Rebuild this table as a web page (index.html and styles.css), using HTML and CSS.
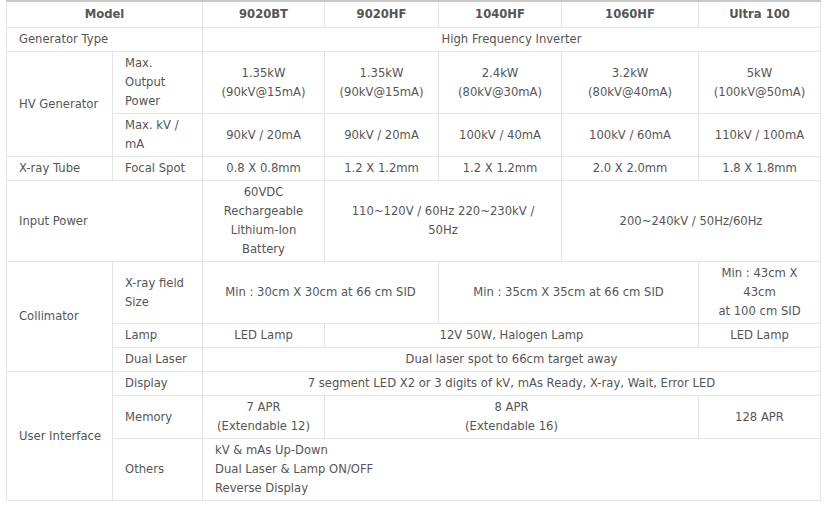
FILE: index.html
```html
<!DOCTYPE html>
<html lang="en">
<head>
<meta charset="utf-8">
<title>Spec table</title>
<link rel="stylesheet" href="styles.css">
</head>
<body>
<table class="spec">
  <colgroup>
    <col class="c-cat">
    <col class="c-sub">
    <col class="c-m1">
    <col class="c-m2">
    <col class="c-m3">
    <col class="c-m4">
    <col class="c-m5">
  </colgroup>
  <thead>
    <tr>
      <th colspan="2">Model</th>
      <th>9020BT</th>
      <th>9020HF</th>
      <th>1040HF</th>
      <th>1060HF</th>
      <th>Ultra 100</th>
    </tr>
  </thead>
  <tbody>
    <tr>
      <td class="lbl cat" colspan="2">Generator Type</td>
      <td colspan="5">High Frequency Inverter</td>
    </tr>
    <tr>
      <td class="lbl cat" rowspan="2">HV Generator</td>
      <td class="lbl">Max. Output Power</td>
      <td>1.35kW<br>(90kV@15mA)</td>
      <td>1.35kW<br>(90kV@15mA)</td>
      <td>2.4kW<br>(80kV@30mA)</td>
      <td>3.2kW<br>(80kV@40mA)</td>
      <td>5kW<br>(100kV@50mA)</td>
    </tr>
    <tr>
      <td class="lbl">Max. kV / mA</td>
      <td>90kV / 20mA</td>
      <td>90kV / 20mA</td>
      <td>100kV / 40mA</td>
      <td>100kV / 60mA</td>
      <td>110kV / 100mA</td>
    </tr>
    <tr>
      <td class="lbl cat">X-ray Tube</td>
      <td class="lbl">Focal Spot</td>
      <td>0.8 X 0.8mm</td>
      <td>1.2 X 1.2mm</td>
      <td>1.2 X 1.2mm</td>
      <td>2.0 X 2.0mm</td>
      <td>1.8 X 1.8mm</td>
    </tr>
    <tr>
      <td class="lbl cat" colspan="2">Input Power</td>
      <td>60VDC Rechargeable Lithium-Ion Battery</td>
      <td colspan="2">110~120V / 60Hz 220~230kV /<br>50Hz</td>
      <td colspan="2">200~240kV / 50Hz/60Hz</td>
    </tr>
    <tr>
      <td class="lbl cat" rowspan="3">Collimator</td>
      <td class="lbl">X-ray field Size</td>
      <td colspan="2">Min : 30cm X 30cm at 66 cm SID</td>
      <td colspan="2">Min : 35cm X 35cm at 66 cm SID</td>
      <td>Min : 43cm X 43cm<br>at 100 cm SID</td>
    </tr>
    <tr>
      <td class="lbl">Lamp</td>
      <td>LED Lamp</td>
      <td colspan="3">12V 50W, Halogen Lamp</td>
      <td>LED Lamp</td>
    </tr>
    <tr>
      <td class="lbl">Dual Laser</td>
      <td colspan="5">Dual laser spot to 66cm target away</td>
    </tr>
    <tr>
      <td class="lbl cat" rowspan="3">User Interface</td>
      <td class="lbl">Display</td>
      <td colspan="5">7 segment LED X2 or 3 digits of kV, mAs Ready, X-ray, Wait, Error LED</td>
    </tr>
    <tr>
      <td class="lbl">Memory</td>
      <td>7 APR<br>(Extendable 12)</td>
      <td colspan="3">8 APR<br>(Extendable 16)</td>
      <td>128 APR</td>
    </tr>
    <tr>
      <td class="lbl">Others</td>
      <td class="lbl" colspan="5">kV &amp; mAs Up-Down<br>Dual Laser &amp; Lamp ON/OFF<br>Reverse Display</td>
    </tr>
  </tbody>
</table>
</body>
</html>
```

FILE: styles.css
```css
html, body {
  margin: 0;
  padding: 0;
  background: #ffffff;
}

body {
  padding-left: 6px;
  font-family: "DejaVu Sans", Verdana, sans-serif;
  font-size: 11.6px;
  color: #555555;
}

.spec {
  border-collapse: collapse;
  table-layout: fixed;
  width: 814px;
  border-top: 2px solid #c9c9c9;
}

.c-cat { width: 106px; }
.c-sub { width: 90px; }
.c-m1 { width: 122px; }
.c-m2 { width: 114px; }
.c-m3 { width: 123px; }
.c-m4 { width: 137px; }
.c-m5 { width: 122px; }

.spec th,
.spec td {
  border: 1px solid #e4e4e4;
  padding: 2px 12px;
  line-height: 19px;
  text-align: center;
  vertical-align: middle;
  font-weight: normal;
}

.spec th {
  font-weight: bold;
  padding-top: 3px;
  padding-bottom: 3px;
  color: #555555;
}

.spec thead th {
  border-top: 2px solid #c9c9c9;
}

.spec td.lbl {
  text-align: left;
}

.spec td.cat {
  white-space: nowrap;
  padding-right: 4px;
}
```
